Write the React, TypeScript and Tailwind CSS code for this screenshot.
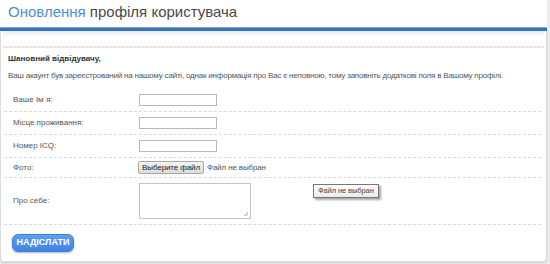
const body = { fontFamily: '"Liberation Sans", Arial, sans-serif' };

const Row = ({
  label,
  className,
  children,
}: {
  label: string;
  className: string;
  children?: React.ReactNode;
}) => (
  <div className={`flex items-center border-b border-dashed border-[#d9d9d9] ${className}`}>
    <div className="w-[135px] shrink-0 pl-[9px] text-[8px] text-[#555]">{label}</div>
    {children}
  </div>
);

const TextInput = () => (
  <div className="w-[78px] h-[12px] border border-[#b9b9b9] bg-white" />
);

export default function App() {
  return (
    <div className="w-[550px] h-[264px] bg-[#ececec] overflow-hidden" style={body}>
      <div className="w-[547px] h-[262px] flex flex-col">
        {/* header */}
        <div className="h-[27px] bg-white pl-[8px] pt-[3px]">
          <h1 className="text-[15px] leading-[18px] text-[#4a4a4a]">
            <span className="text-[#4a93d0]">Оновлення</span> профіля користувача
          </h1>
        </div>
        <div className="h-[4px] bg-[#3573c1] border-t border-[#76a6de]" />

        {/* box */}
        <div className="flex-1 bg-white border-l border-r border-b border-[#dcdcdc] rounded-b-[4px] shadow-[0_1px_2px_rgba(0,0,0,0.12)]">
          <div className="h-[17px] mx-[2px] border-b-2 border-dotted border-[#e4e4e4] bg-gradient-to-b from-[#ececec] to-white to-[45%]" />

          <div className="pl-[7px] pt-[5px] pb-[7px]">
            <p className="text-[8px] leading-[12px] font-bold text-[#333]">Шановний відвідувачу,</p>
            <p className="mt-[5px] text-[8px] leading-[12px] text-[#555] tracking-[-0.2px]">
              Ваш акаунт був зареєстрований на нашому сайті, однак информація про Вас є неповною, тому
              заповніть додаткові поля в Вашому профілі.
            </p>
          </div>

          <div className="relative ml-[3px] mr-[5px]">
            <Row label="Ваше Ім`я:" className="h-[23px]">
              <TextInput />
            </Row>
            <Row label="Місце проживання:" className="h-[23px]">
              <TextInput />
            </Row>
            <Row label="Номер ICQ:" className="h-[23px]">
              <TextInput />
            </Row>
            <Row label="Фото:" className="h-[20px]">
              <div className="flex items-center gap-[3px] -ml-[1px]">
                <span className="h-[13px] px-[3px] flex items-center border border-[#a9a9a9] rounded-[2px] bg-gradient-to-b from-[#f4f4f4] to-[#dcdcdc] text-[8px] text-[#222] tracking-[-0.1px]">
                  Выберите файл
                </span>
                <span className="text-[8px] text-[#555] tracking-[-0.15px]">Файл не выбран</span>
              </div>
            </Row>
            <Row label="Про себе:" className="h-[47px]">
              <div className="relative w-[112px] h-[36px] border border-[#c4c4c4] bg-white">
                <svg className="absolute right-[1px] bottom-[1px]" width="6" height="6" viewBox="0 0 6 6">
                  <path d="M5 1L1 5M5 3L3 5" stroke="#999" strokeWidth="0.8" />
                </svg>
              </div>
            </Row>

            {/* tooltip */}
            <div className="absolute left-[309px] top-[95px] h-[14px] px-[4px] flex items-center border border-[#767676] bg-gradient-to-b from-white to-[#ececec] text-[7.5px] text-[#444] tracking-[-0.1px] shadow-[2px_2px_2px_rgba(0,0,0,0.35)]">
              Файл не выбран
            </div>
          </div>

          <div className="flex pl-[11px] pt-[9px]">
            <button className="h-[18px] w-[62px] rounded-[6px] border border-[#3f7fd6] bg-gradient-to-b from-[#5d9ff0] to-[#3e84e0] text-[9px] font-bold text-white shadow-[0_1px_2px_rgba(0,0,0,0.3)]">
              НАДІСЛАТИ
            </button>
          </div>
        </div>
      </div>
    </div>
  );
}
